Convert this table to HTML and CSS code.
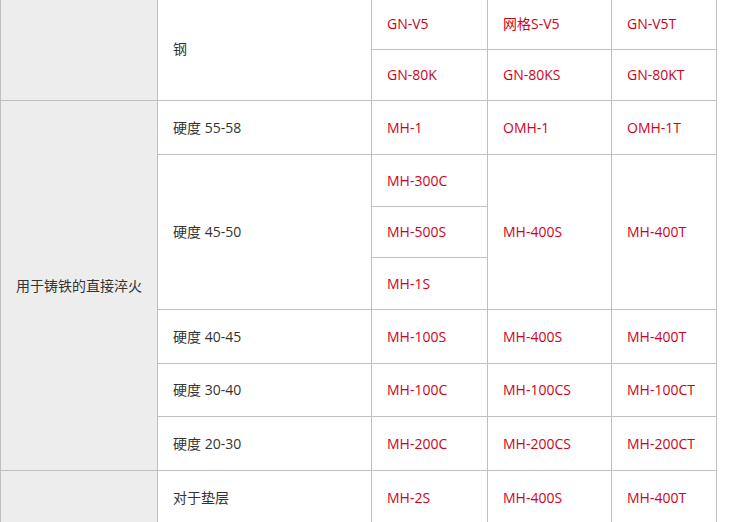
FILE: index.html
```html
<!DOCTYPE html>
<html lang="zh-CN">
<head>
<meta charset="utf-8">
<title>淬火</title>
<link rel="stylesheet" href="styles.css">
</head>
<body>
<table class="grid">
  <colgroup>
    <col class="c1"><col class="c2"><col class="c3"><col class="c4"><col class="c5">
  </colgroup>
  <tbody>
    <tr class="ra">
      <td class="cat" rowspan="2"></td>
      <td class="sub" rowspan="2">钢</td>
      <td class="val">GN-V5</td>
      <td class="val">网格S-V5</td>
      <td class="val">GN-V5T</td>
    </tr>
    <tr class="rb">
      <td class="val">GN-80K</td>
      <td class="val">GN-80KS</td>
      <td class="val">GN-80KT</td>
    </tr>
    <tr class="rc">
      <td class="cat" rowspan="7">用于铸铁的直接淬火</td>
      <td class="sub">硬度 55-58</td>
      <td class="val">MH-1</td>
      <td class="val">OMH-1</td>
      <td class="val">OMH-1T</td>
    </tr>
    <tr class="rd">
      <td class="sub" rowspan="3">硬度 45-50</td>
      <td class="val">MH-300C</td>
      <td class="val" rowspan="3">MH-400S</td>
      <td class="val" rowspan="3">MH-400T</td>
    </tr>
    <tr class="re">
      <td class="val">MH-500S</td>
    </tr>
    <tr class="rf">
      <td class="val">MH-1S</td>
    </tr>
    <tr class="rg">
      <td class="sub">硬度 40-45</td>
      <td class="val">MH-100S</td>
      <td class="val">MH-400S</td>
      <td class="val">MH-400T</td>
    </tr>
    <tr class="rh">
      <td class="sub">硬度 30-40</td>
      <td class="val">MH-100C</td>
      <td class="val">MH-100CS</td>
      <td class="val">MH-100CT</td>
    </tr>
    <tr class="ri">
      <td class="sub">硬度 20-30</td>
      <td class="val">MH-200C</td>
      <td class="val">MH-200CS</td>
      <td class="val">MH-200CT</td>
    </tr>
    <tr class="rj">
      <td class="cat"></td>
      <td class="sub">对于垫层</td>
      <td class="val">MH-2S</td>
      <td class="val">MH-400S</td>
      <td class="val">MH-400T</td>
    </tr>
  </tbody>
</table>
</body>
</html>
```
FILE: styles.css
```css
html, body {
  margin: 0;
  padding: 0;
  background: #ffffff;
}
body {
  font-family: "Open Sans", "Noto Sans CJK SC", sans-serif;
  font-size: 14px;
  color: #333333;
}
.grid {
  border-collapse: collapse;
  table-layout: fixed;
  width: 716px;
  margin-top: -3px;
}
.c1 { width: 157px; }
.c2 { width: 214px; }
.c3 { width: 116px; }
.c4 { width: 124px; }
.c5 { width: 105px; }
.grid td {
  border: 1px solid #bfbfbf;
  padding: 0 0 0 15px;
  vertical-align: middle;
  line-height: 20px;
  white-space: nowrap;
}
.grid td.cat {
  background: #ededed;
  padding: 0;
  text-align: center;
}
.grid td.val {
  color: #d0021b;
}
.ra { height: 52px; }
.rb { height: 51px; }
.rc { height: 54px; }
.rd { height: 52px; }
.re { height: 51px; }
.rf { height: 52px; }
.rg { height: 54px; }
.rh { height: 53px; }
.ri { height: 54px; }
.rj { height: 54px; }
```
